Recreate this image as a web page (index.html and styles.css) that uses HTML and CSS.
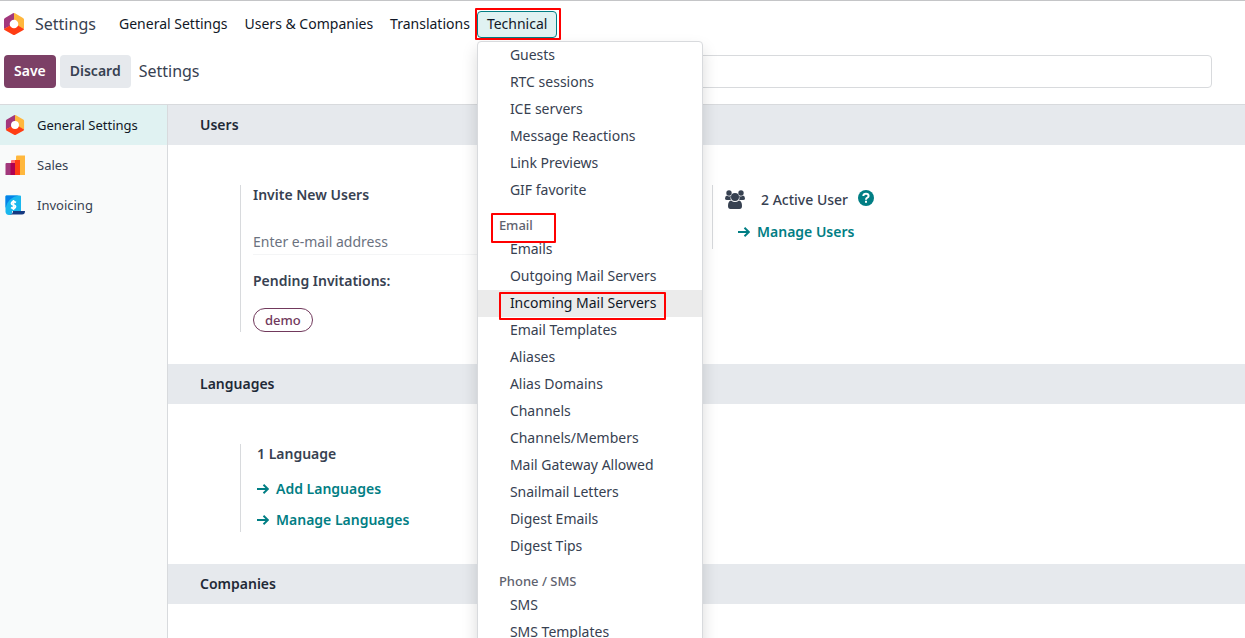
FILE: index.html
```html
<!DOCTYPE html>
<html lang="en">
<head>
<meta charset="utf-8">
<title>Settings</title>
<link rel="stylesheet" href="styles.css">
</head>
<body>
<svg class="defs" aria-hidden="true">
  <symbol id="logo" viewBox="0 0 20 22">
    <path fill="#a2387c" d="M10 0v7L6 10v3l-6 3V6.5Q0 5.500 1 5L9 .300Q9.500 0 10 0z"/>
    <path fill="#ffb73d" d="M10 0q.5 0 1 .3L19 5q1 .500 1 1.500V16l-6-3v-3l-4-3z"/>
    <path fill="#ff3d13" d="M0 16l6-3.500q4 3.500 8 0L20 16q0 .800-1 1.300l-8 4.400q-1 .6-2 0l-8-4.400Q0 16.800 0 16z"/>
    <circle cx="10" cy="11" r="4.300" fill="#fff"/>
  </symbol>
  <symbol id="arrow" viewBox="0 0 12 12">
    <path d="M0 6h10.500M6.500 1.800L10.800 6l-4.300 4.200" fill="none" stroke="currentColor" stroke-width="1.900"/>
  </symbol>
</svg>
<header class="top">
  <nav class="navbar">
    <svg class="brand-icon"><use href="#logo"/></svg>
    <a class="brand" href="#">Settings</a>
    <a class="nav-link" href="#">General Settings</a>
    <a class="nav-link" href="#">Users &amp; Companies</a>
    <a class="nav-link" href="#">Translations</a>
    <div class="dropdown">
      <button class="nav-toggle marked" type="button" aria-expanded="true">Technical</button>
      <div class="menu">
        <a class="item" href="#">Guests</a>
        <a class="item" href="#">RTC sessions</a>
        <a class="item" href="#">ICE servers</a>
        <a class="item" href="#">Message Reactions</a>
        <a class="item" href="#">Link Previews</a>
        <a class="item" href="#">GIF favorite</a>
        <div class="menu-head marked">Email</div>
        <a class="item" href="#">Emails</a>
        <a class="item" href="#">Outgoing Mail Servers</a>
        <a class="item active marked" href="#">Incoming Mail Servers</a>
        <a class="item" href="#">Email Templates</a>
        <a class="item" href="#">Aliases</a>
        <a class="item" href="#">Alias Domains</a>
        <a class="item" href="#">Channels</a>
        <a class="item" href="#">Channels/Members</a>
        <a class="item" href="#">Mail Gateway Allowed</a>
        <a class="item" href="#">Snailmail Letters</a>
        <a class="item" href="#">Digest Emails</a>
        <a class="item" href="#">Digest Tips</a>
        <div class="menu-head">Phone / SMS</div>
        <a class="item" href="#">SMS</a>
        <a class="item" href="#">SMS Templates</a>
      </div>
    </div>
  </nav>
  <div class="panel">
    <button class="btn primary" type="button">Save</button>
    <button class="btn" type="button">Discard</button>
    <span class="crumb">Settings</span>
    <input class="search" type="text" aria-label="Search">
  </div>
</header>
<div class="layout">
  <aside class="sidebar">
    <a class="tab selected" href="#"><svg class="tab-icon" viewBox="0 0 20 20"><use href="#logo" width="20" height="20"/></svg>General Settings</a>
    <a class="tab" href="#"><svg class="tab-icon" viewBox="0 0 20 20">
      <path fill="#ffb73d" d="M11 1.500Q11 .500 12 .500h8V20h-9z"/>
      <path fill="#ff6b72" d="M6 6q0-1 1-1h4v8H6z"/>
      <path fill="#ff3d13" d="M10 5h5v15h-5z"/>
      <path fill="#a2387c" d="M.500 9q0-1 1-1H6v12H.500z"/>
      <path fill="#ae0052" d="M5.500 8H10v12H5.500z"/>
    </svg>Sales</a>
    <a class="tab" href="#"><svg class="tab-icon" viewBox="0 0 20 20">
      <path fill="#1ab7ee" d="M1.500.500H15q1 0 1 1V16H7v2q0 2-3 2T.500 17V1.500q0-1 1-1z"/>
      <path fill="#0682e8" d="M1.500.500H14A15 15 0 0 0 .500 13V1.500q0-1 1-1z"/>
      <path fill="#153880" d="M8 16h12q0 3.500-3 3.500H5q3-.5 3-3.500z"/>
      <path fill="none" stroke="#fff" stroke-width="1.700" d="M11 7.500Q8 5.800 6.800 7.500T8.500 10t1.700 2.500T6 12.500M8.500 5v10"/>
    </svg>Invoicing</a>
  </aside>
  <main class="content">
    <h2 class="section-title">Users</h2>
    <section class="settings">
      <div class="setting">
        <h3 class="label"><label for="email">Invite New Users</label></h3>
        <input class="email" id="email" type="text" placeholder="Enter e-mail address">
        <h3 class="label pending">Pending Invitations:</h3>
        <button class="badge" type="button">demo</button>
      </div>
      <div class="setting users">
        <div class="active-users">
          <svg class="group-icon" viewBox="0 0 20 19" fill="#374151">
            <circle cx="4" cy="3" r="2.700"/><circle cx="16" cy="3" r="2.700"/>
            <path d="M2 5.500q2 1.500 4 .500-1 2-.2 4H2Q0 10 0 8.500 0 6 2 5.500zM18 5.500q-2 1.500-4 .5 1 2 .2 4H18q2 0 2-1.500 0-2.500-2-3z"/>
            <circle cx="10" cy="7" r="4"/>
            <path d="M6 10.500q4 3 8 0 3 .5 3 5.500 0 3-2.500 3h-9Q3 19 3 16q0-5 3-5.500z"/>
          </svg>
          <span>2 Active User</span>
          <a class="help" href="#" aria-label="Help"><svg viewBox="0 0 16 16"><circle cx="8" cy="8" r="8" fill="#017e84"/><path d="M5.300 6Q5.500 3.800 8 3.800t2.600 2.100Q10.600 7 9.300 7.700 8 8.300 8 9.700" fill="none" stroke="#fff" stroke-width="2"/><path fill="#fff" d="M7 10.800h2v2H7z"/></svg></a>
        </div>
        <a class="action" href="#"><svg class="arrow"><use href="#arrow"/></svg>Manage Users</a>
      </div>
    </section>
    <h2 class="section-title">Languages</h2>
    <section class="settings">
      <div class="setting languages">
        <h3 class="label">1 Language</h3>
        <a class="action" href="#"><svg class="arrow"><use href="#arrow"/></svg>Add Languages</a>
        <a class="action" href="#"><svg class="arrow"><use href="#arrow"/></svg>Manage Languages</a>
      </div>
    </section>
    <h2 class="section-title">Companies</h2>
  </main>
</div>
</body>
</html>
```
FILE: styles.css
```css
* { box-sizing: border-box; }
body {
  margin: 0;
  height: 100vh;
  overflow: hidden;
  display: flex;
  flex-direction: column;
  background: #fff;
  color: #374151;
  font: 14px/20px "Noto Sans", "Open Sans", sans-serif;
}
a { color: inherit; text-decoration: none; }
button, input { font: inherit; color: inherit; }
.defs { position: absolute; width: 0; height: 0; }

.top { border-top: 1px solid #c4c5c7; border-bottom: 1px solid #d8dadd; }
.navbar { display: flex; align-items: center; height: 46px; padding-left: 4px; white-space: nowrap; }
.brand-icon { width: 20px; height: 22px; }
.brand { width: 84px; margin-left: 11px; font-size: 16px; }
.nav-link { padding-right: 17px; color: #111827; }
.dropdown { position: relative; margin-left: -10px; }
.nav-toggle {
  position: relative;
  display: block;
  height: 27px;
  padding: 0 9px;
  border: 1px solid #017e84;
  border-radius: 4px;
  background: #e0f2f2;
  color: #111827;
}
.marked::after {
  content: "";
  position: absolute;
  border: 2px solid #f00;
  border-radius: 1px;
  pointer-events: none;
}
.nav-toggle.marked::after { inset: -4px -5px -3px -3px; }
.menu {
  position: absolute;
  z-index: 5;
  top: 30px;
  left: 0;
  width: 226px;
  border: 1px solid #d8dadd;
  border-radius: 4px;
  background: #fff;
  box-shadow: 0 8px 16px rgba(0, 0, 0, .15);
}
.item { display: block; height: 27px; padding-left: 32px; line-height: 26px; }
.item.active { position: relative; background: #ebebeb; color: #111827; }
.item.marked::after { inset: 2px 36px -3px 21px; }
.menu-head {
  position: relative;
  height: 32px;
  padding: 11px 0 0 21px;
  color: #5f636f;
  font-size: 13px;
  font-weight: 500;
}
.menu-head.marked::after { inset: 9px 146px -7px 13px; }

.panel { display: flex; align-items: center; height: 57px; padding: 0 33px 9px 4px; }
.btn {
  height: 33px;
  margin-right: 4px;
  padding: 0 10px;
  border: 0;
  border-radius: 4px;
  background: #e6e9ed;
  font-weight: 600;
}
.btn.primary { background: #7c4066; color: #fff; }
.crumb { margin-left: 4px; font-size: 16px; }
.search {
  width: 48%;
  height: 33px;
  margin-left: auto;
  border: 1px solid #d8dadd;
  border-radius: 4px;
}

.layout { display: flex; flex: 1; min-height: 0; }
.sidebar {
  flex: 0 0 168px;
  border-right: 1px solid #d8dadd;
  background: #f9fafa;
  font-size: 13px;
}
.tab { display: flex; align-items: center; gap: 12px; height: 40px; padding-left: 5px; }
.tab.selected { background: #e0f2f2; color: #111827; }
.tab-icon { width: 20px; height: 20px; }

.content { flex: 1; min-width: 0; overflow: hidden; }
.section-title {
  margin: 0;
  padding-left: 32px;
  background: #e6e9ed;
  color: #1f2937;
  font-size: 14px;
  font-weight: 600;
  line-height: 40px;
}
.settings {
  display: grid;
  grid-template-columns: 1fr 1fr;
  align-items: start;
  padding: 40px 61px 32px 72px;
}
.setting { min-height: 64px; padding-left: 12px; border-left: 1px solid #d8dadd; }
.label { margin: 0; font-size: 14px; font-weight: 600; }
.email {
  display: block;
  width: 90%;
  height: 26px;
  margin-top: 24px;
  padding: 0;
  border: 0;
  border-bottom: 1px solid #f4f5f6;
}
.email::placeholder { color: #6b7280; opacity: 1; }
.pending { margin: 16px 0 17px; }
.badge {
  display: block;
  height: 24px;
  padding: 0 11px;
  border: 1px solid #71395c;
  border-radius: 12px;
  background: #fff;
  color: #71395c;
  font-size: 13px;
  font-weight: 500;
  line-height: 20px;
}
.active-users { display: flex; align-items: center; height: 29px; font-weight: 500; }
.group-icon { width: 20px; height: 19px; margin-right: 16px; }
.help { display: flex; width: 16px; margin: 0 0 3px 10px; }
.action { display: flex; align-items: center; gap: 7px; color: #017e84; font-weight: 600; }
.arrow { width: 12px; height: 12px; }
.users .action { margin: 8px 0 0 13px; }
.languages { padding-left: 16px; padding-bottom: 2px; }
.languages .action { margin-top: 15px; }
.languages .action + .action { margin-top: 11px; }
```
